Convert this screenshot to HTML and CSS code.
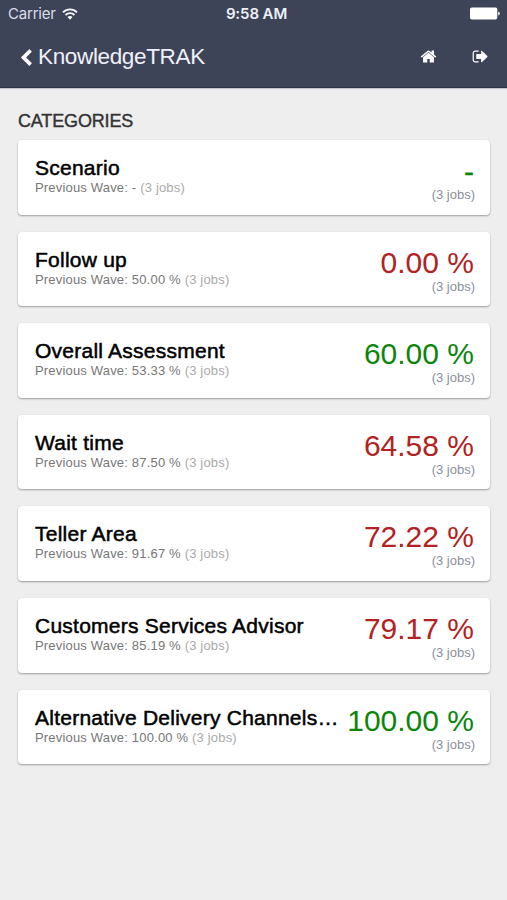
FILE: index.html
```html
<!DOCTYPE html>
<html lang="en">
<head>
    <meta charset="UTF-8" />
    <meta name="viewport" content="width=device-width, initial-scale=1" />
    <title>KnowledgeTRAK</title>
    <link rel="stylesheet" href="styles.css">
</head>
<body>
    <header>
        <div class="status-bar">
            <div class="carrier">
                <span>Carrier</span>
                <svg class="wifi" viewBox="0 0 16 12">
                    <path d="M1 4.3a10 10 0 0 1 14 0M3.5 7a6.4 6.4 0 0 1 9 0" />
                    <path class="dot" d="M5.5 9.1a3.6 3.6 0 0 1 5 0L8 11.7z" />
                </svg>
            </div>
            <span class="time">9:58 AM</span>
            <svg class="battery" viewBox="0 0 30 13">
                <rect x="0" y="0.5" width="27.3" height="12" rx="1.8" />
                <path d="M28.2 4.4q1.6.6 1.6 2.1t-1.6 2.1z" />
            </svg>
        </div>
        <nav>
            <a class="back">
                <svg class="chevron" viewBox="410 0 1050 1670"><path d="M1427 301l-531 531 531 531q19 19 19 45t-19 45l-166 166q-19 19-45 19t-45-19l-742-742q-19-19-19-45t19-45l742-742q19-19 45-19t45 19l166 166q19 19 19 45t-19 45z" /></svg>
                <span>KnowledgeTRAK</span>
            </a>
            <div class="actions">
                <svg viewBox="0 0 1792 1792"><path d="M1472 992v480q0 26-19 45t-45 19h-384v-384h-256v384h-384q-26 0-45-19t-19-45v-480q0-1 .5-3t.5-3l575-474 575 474q1 2 1 6zm223-69l-62 74q-8 9-21 11h-3q-13 0-21-7l-692-577-692 577q-12 8-24 7-13-2-21-11l-62-74q-8-10-7-23.5t11-21.5l719-599q32-26 76-26t76 26l244 204v-195q0-14 9-23t23-9h192q14 0 23 9t9 23v408l219 182q10 8 11 21.5t-7 23.5z" /></svg>
                <svg viewBox="0 0 1792 1792"><path d="M704 1440q0 4 1 20t.5 26.5-3 23.5-10 19.5-20.5 6.5h-320q-119 0-203.5-84.5t-84.5-203.5v-704q0-119 84.5-203.5t203.5-84.5h320q13 0 22.5 9.5t9.5 22.5q0 4 1 20t.5 26.5-3 23.5-10 19.5-20.5 6.5h-320q-66 0-113 47t-47 113v704q0 66 47 113t113 47h312l11.5 1 11.5 3 8 5.5 7 9 2 13.5zm928-544q0 26-19 45l-544 544q-19 19-45 19t-45-19-19-45v-288h-448q-26 0-45-19t-19-45v-384q0-26 19-45t45-19h448v-288q0-26 19-45t45-19 45 19l544 544q19 19 19 45z" /></svg>
            </div>
        </nav>
    </header>

    <main>
        <h1>CATEGORIES</h1>

        <div class="card">
            <div class="info">
                <h2>Scenario</h2>
                <p>Previous Wave: - <span>(3 jobs)</span></p>
            </div>
            <div class="score up">
                <strong class="none">-</strong>
                <small>(3 jobs)</small>
            </div>
        </div>

        <div class="card">
            <div class="info">
                <h2>Follow up</h2>
                <p>Previous Wave: 50.00 % <span>(3 jobs)</span></p>
            </div>
            <div class="score down">
                <strong>0.00 %</strong>
                <small>(3 jobs)</small>
            </div>
        </div>

        <div class="card">
            <div class="info">
                <h2>Overall Assessment</h2>
                <p>Previous Wave: 53.33 % <span>(3 jobs)</span></p>
            </div>
            <div class="score up">
                <strong>60.00 %</strong>
                <small>(3 jobs)</small>
            </div>
        </div>

        <div class="card">
            <div class="info">
                <h2>Wait time</h2>
                <p>Previous Wave: 87.50 % <span>(3 jobs)</span></p>
            </div>
            <div class="score down">
                <strong>64.58 %</strong>
                <small>(3 jobs)</small>
            </div>
        </div>

        <div class="card">
            <div class="info">
                <h2>Teller Area</h2>
                <p>Previous Wave: 91.67 % <span>(3 jobs)</span></p>
            </div>
            <div class="score down">
                <strong>72.22 %</strong>
                <small>(3 jobs)</small>
            </div>
        </div>

        <div class="card">
            <div class="info">
                <h2>Customers Services Advisor</h2>
                <p>Previous Wave: 85.19 % <span>(3 jobs)</span></p>
            </div>
            <div class="score down">
                <strong>79.17 %</strong>
                <small>(3 jobs)</small>
            </div>
        </div>

        <div class="card">
            <div class="info">
                <h2>Alternative Delivery Channels…</h2>
                <p>Previous Wave: 100.00 % <span>(3 jobs)</span></p>
            </div>
            <div class="score up">
                <strong>100.00 %</strong>
                <small>(3 jobs)</small>
            </div>
        </div>
    </main>
</body>
</html>
```
FILE: styles.css
```css
* {
    box-sizing: border-box;
}
body {
    margin: 0;
    min-height: 900px;
    font-family: "Liberation Sans", Arial, sans-serif;
    background: #eeeeee;
    color: #000;
}
header {
    height: 88px;
    background: #3e4457;
    border-bottom: 1px solid #2b3044;
    box-shadow: 0 1px 1px #c4c6cc;
    color: #eef1fb;
}
svg {
    display: block;
    fill: #fff;
}

/* status bar */
.status-bar {
    display: grid;
    grid-template-columns: 1fr auto 1fr;
    align-items: center;
    height: 27px;
    padding: 0 7px 0 8px;
    font-family: Inter, "Liberation Sans", sans-serif;
    font-size: 15px;
}
.carrier {
    display: flex;
    align-items: center;
    gap: 6px;
    letter-spacing: -0.2px;
    color: #d9deea;
}
.wifi {
    width: 16px;
    height: 12px;
    fill: none;
    stroke: #f3f5fb;
    stroke-width: 1.8;
}
.wifi .dot {
    fill: #fff;
    stroke: none;
}
.time {
    padding-left: 5px;
    font-weight: 600;
    letter-spacing: -0.1px;
}
.battery {
    width: 30px;
    height: 13px;
    justify-self: end;
}

/* title bar */
nav {
    display: flex;
    align-items: center;
    justify-content: space-between;
    height: 59px;
    padding: 0 18px 0 21px;
}
.back {
    display: flex;
    align-items: center;
    gap: 6px;
    padding-top: 1px;
    font-size: 22.5px;
    letter-spacing: -0.35px;
}
.chevron {
    width: 11px;
    height: 17px;
}
.actions {
    display: flex;
    gap: 35px;
}
.actions svg {
    width: 17px;
    height: 17px;
}

main {
    padding: 22px 17px 0 18px;
}
h1 {
    margin: 0 0 8px;
    font-size: 18px;
    font-weight: normal;
    line-height: 22px;
    letter-spacing: -0.15px;
    color: #333;
    -webkit-text-stroke: 0.4px #333;
}
.card {
    display: flex;
    justify-content: space-between;
    height: 74.6px;
    margin-bottom: 17px;
    padding: 0 15px 0 17px;
    background: #fff;
    border-radius: 4px;
    box-shadow: 0 1px 2px rgba(0, 0, 0, 0.35);
    white-space: nowrap;
}
.info {
    padding-top: 16px;
}
h2 {
    margin: 0;
    font-size: 21px;
    font-weight: normal;
    line-height: 24px;
    letter-spacing: 0.24px;
    -webkit-text-stroke: 0.5px #000;
}
.info p {
    margin: 0;
    font-size: 13px;
    line-height: 16px;
    letter-spacing: 0.18px;
    color: #777;
}
.info span {
    color: #aaa;
}
.score {
    display: flex;
    flex-direction: column;
    align-items: flex-end;
    padding-top: 14px;
}
.score strong {
    margin-right: 1px;
    font-size: 30px;
    font-weight: normal;
    line-height: 33px;
}
.score .none {
    height: 33px;
    line-height: 36px;
    -webkit-text-stroke: 0.4px;
}
.score small {
    font-size: 13px;
    line-height: 16px;
    color: #8a8f9c;
}
.up strong {
    color: #0b850b;
}
.down strong {
    color: #b22222;
}
```
